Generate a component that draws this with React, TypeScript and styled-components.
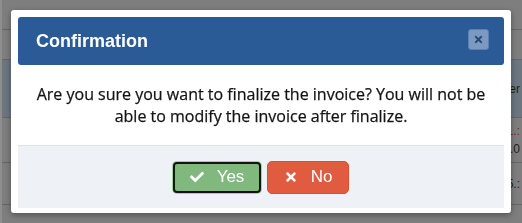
import styled, { createGlobalStyle } from "styled-components";
import { FaCheck, FaTimes } from "react-icons/fa";

const GlobalStyle = createGlobalStyle`
  html, body {
    margin: 0;
    padding: 0;
    width: 522px;
    height: 223px;
    overflow: hidden;
    background: #7e7e7e;
  }
`;

const Page = styled.div`
  display: flex;
  flex-direction: column;
  height: 223px;
  border-left: 2px solid #8e8e8e;
  font-family: "Liberation Sans", Arial, sans-serif;
`;

const Row = styled.div<{ $h: number; $band?: boolean }>`
  height: ${(p) => p.$h}px;
  box-sizing: border-box;
  border-bottom: 1px solid #666;
  background: ${(p) => (p.$band ? "#6c7680" : "transparent")};
  display: flex;
  flex-direction: column;
  align-items: flex-end;
  justify-content: center;
  gap: 4px;
  padding-right: 2px;
`;

const Cell = styled.span<{ $red?: boolean }>`
  font-size: 12px;
  color: ${(p) => (p.$red ? "#8a1a14" : "#1e1e1e")};
`;

const Overlay = styled.div`
  position: fixed;
  inset: 0;
  display: flex;
  justify-content: center;
  align-items: flex-start;
  padding-top: 10px;
`;

const Modal = styled.div`
  width: 500px;
  box-sizing: border-box;
  padding: 7px 7px 5px;
  background: #fff;
  border-radius: 3px;
  box-shadow: 0 2px 6px rgba(0, 0, 0, 0.35);
`;

const Header = styled.div`
  height: 48px;
  display: flex;
  align-items: center;
  justify-content: space-between;
  padding: 0 15px 0 18px;
  background: #2b5b97;
  border-radius: 3px;
`;

const Title = styled.h4`
  margin: 0;
  color: #fff;
  font-family: "Liberation Sans", Arial, sans-serif;
  font-weight: bold;
  font-size: 18px;
`;

const Close = styled.button`
  width: 21px;
  height: 21px;
  margin-top: -3px;
  padding: 0;
  display: flex;
  align-items: center;
  justify-content: center;
  background: #7b99c1;
  border: 1px solid #5d80b0;
  border-radius: 3px;
  color: #284a79;
  font-size: 11px;
`;

const Body = styled.div`
  padding: 18px 8px 18px;
  text-align: center;
  font-family: "Open Sans", "Noto Sans", sans-serif;
  font-size: 16px;
  line-height: 22px;
  color: #141414;
  -webkit-text-stroke: 0.25px #141414;
`;

const Footer = styled.div`
  height: 63px;
  box-sizing: border-box;
  border-top: 1px solid #dfe3ea;
  background: #eef1f6;
  display: flex;
  align-items: center;
  justify-content: center;
  gap: 6px;
`;

const Button = styled.button<{ $variant: "yes" | "no" }>`
  height: ${(p) => (p.$variant === "yes" ? 31 : 33)}px;
  width: ${(p) => (p.$variant === "yes" ? 88 : 82)}px;
  box-sizing: border-box;
  display: flex;
  align-items: center;
  justify-content: center;
  gap: 13px;
  font-family: "Liberation Sans", Arial, sans-serif;
  font-size: 17px;
  color: #fff;
  cursor: pointer;
  border-radius: ${(p) => (p.$variant === "yes" ? 4 : 5)}px;
  background: ${(p) => (p.$variant === "yes" ? "#80b87e" : "#e05b40")};
  border: ${(p) =>
    p.$variant === "yes" ? "2px solid #141414" : "1px solid #d9512f"};
  box-shadow: ${(p) =>
    p.$variant === "yes" ? "0 0 0 1px #9fd49d" : "none"};
  svg {
    font-size: 14px;
  }
`;

export default function App() {
  return (
    <>
      <GlobalStyle />
      <Page>
        <Row $h={30} />
        <Row $h={30} />
        <Row $h={58} $band>
          <Cell>er</Cell>
        </Row>
        <Row $h={45}>
          <Cell $red>1.:</Cell>
          <Cell>0.0</Cell>
        </Row>
        <Row $h={42}>
          <Cell>5.:</Cell>
        </Row>
      </Page>
      <Overlay>
        <Modal>
          <Header>
            <Title>Confirmation</Title>
            <Close aria-label="close">
              <FaTimes />
            </Close>
          </Header>
          <Body>
            Are you sure you want to finalize the invoice? You will not be
            able to modify the invoice after finalize.
          </Body>
          <Footer>
            <Button $variant="yes">
              <FaCheck />
              Yes
            </Button>
            <Button $variant="no">
              <FaTimes />
              No
            </Button>
          </Footer>
        </Modal>
      </Overlay>
    </>
  );
}
